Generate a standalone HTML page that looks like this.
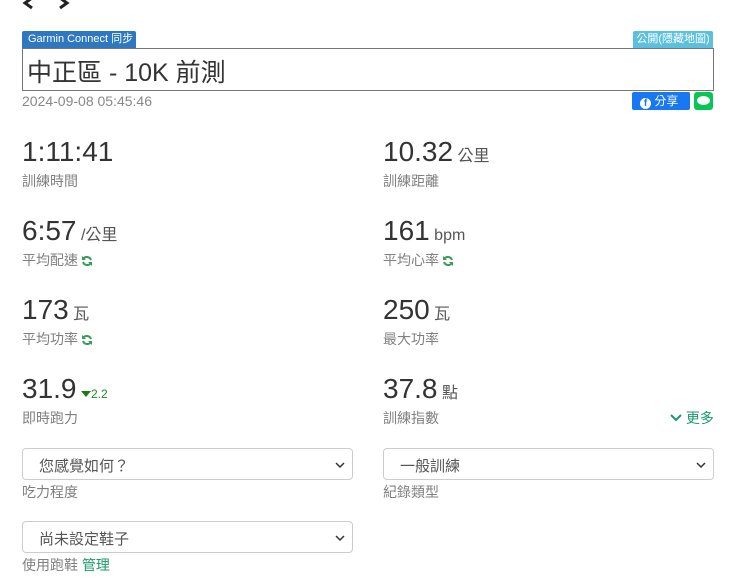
<!DOCTYPE html>
<html><head><meta charset="utf-8"><style>
*{margin:0;padding:0;box-sizing:border-box}
body{width:740px;height:584px;background:#fff;position:relative;overflow:hidden;font-family:"Liberation Sans","Noto Sans CJK TC",sans-serif;color:#333}
.a{position:absolute;white-space:nowrap}
.v{font-size:28px;color:#333;line-height:32px}
.u{font-size:16px;color:#555}
.l{font-size:14px;color:#808080;line-height:18px}
.sel{position:absolute;height:32px;border:1px solid #ccc;border-radius:4px;font-size:15px;color:#555;padding:6px 0 0 16px}
.sel svg{position:absolute;right:7px;top:12px}
.r{display:inline-block;vertical-align:-2px;margin-left:3px}
</style></head><body>
<svg class="a" style="left:20px;top:0" width="60" height="12"><path d="M12 -2 L5 3 L12 8" fill="none" stroke="#222" stroke-width="3"/><path d="M40 -2 L47 3 L40 8" fill="none" stroke="#222" stroke-width="3"/></svg>
<div class="a" style="left:22px;top:31px;width:114px;height:17px;background:#2d78c0;color:#fff;font-size:11px;line-height:17px;padding-left:6px;border-radius:2px 2px 0 0">Garmin Connect 同步</div>
<div class="a" style="left:633px;top:31px;width:80px;height:17px;background:#5bc0de;color:#fff;font-size:11px;line-height:17px;text-align:center;border-radius:2px 2px 0 0">公開(隱藏地圖)</div>
<div class="a" style="left:22px;top:48px;width:692px;height:43px;border:1px solid #777;font-size:25px;color:#333;padding:4px 0 0 4px">中正區 - 10K 前測</div>
<div class="a" style="left:22px;top:93px;font-size:14px;color:#888">2024-09-08 05:45:46</div>
<div class="a" style="left:632px;top:92px;width:58px;height:18px;background:#1877f2;color:#fff;font-size:12px;line-height:18px;border-radius:2px;padding-left:8px"><span style="display:inline-block;width:11px;height:11px;border-radius:50%;background:#fff;color:#1877f2;font-size:10px;line-height:12px;text-align:center;font-weight:bold;vertical-align:-1px">f</span> 分享</div>
<div class="a" style="left:694px;top:92px;width:19px;height:18px;background:#06c755;border-radius:3px"><div style="margin:4px 3px;width:13px;height:9px;background:#fff;border-radius:50%"></div></div>

<div class="a" style="left:22px;top:136px"><span class="v">1:11:41</span></div>
<div class="a l" style="left:22px;top:172px">訓練時間</div>
<div class="a" style="left:383px;top:136px"><span class="v">10.32</span> <span class="u">公里</span></div>
<div class="a l" style="left:383px;top:172px">訓練距離</div>

<div class="a" style="left:22px;top:215px"><span class="v">6:57</span> <span class="u">/公里</span></div>
<div class="a l" style="left:22px;top:251px">平均配速<svg class="r" width="12" height="12"><path d="M10 5A4.5 4.5 0 0 0 2 4M2 7A4.5 4.5 0 0 0 10 8" fill="none" stroke="#3a9a5a" stroke-width="2"/><path d="M1 1V5H5z" fill="#3a9a5a"/><path d="M11 11V7H7z" fill="#3a9a5a"/></svg></div>
<div class="a" style="left:383px;top:215px"><span class="v">161</span> <span class="u">bpm</span></div>
<div class="a l" style="left:383px;top:251px">平均心率<svg class="r" width="12" height="12"><path d="M10 5A4.5 4.5 0 0 0 2 4M2 7A4.5 4.5 0 0 0 10 8" fill="none" stroke="#3a9a5a" stroke-width="2"/><path d="M1 1V5H5z" fill="#3a9a5a"/><path d="M11 11V7H7z" fill="#3a9a5a"/></svg></div>

<div class="a" style="left:22px;top:294px"><span class="v">173</span> <span class="u">瓦</span></div>
<div class="a l" style="left:22px;top:330px">平均功率<svg class="r" width="12" height="12"><path d="M10 5A4.5 4.5 0 0 0 2 4M2 7A4.5 4.5 0 0 0 10 8" fill="none" stroke="#3a9a5a" stroke-width="2"/><path d="M1 1V5H5z" fill="#3a9a5a"/><path d="M11 11V7H7z" fill="#3a9a5a"/></svg></div>
<div class="a" style="left:383px;top:294px"><span class="v">250</span> <span class="u">瓦</span></div>
<div class="a l" style="left:383px;top:330px">最大功率</div>

<div class="a" style="left:22px;top:373px"><span class="v">31.9</span> <span style="font-size:12px;color:#1a8a1a"><svg width="10" height="8"><path d="M0 1H10L5 7z" fill="#1a7a1a"/></svg>2.2</span></div>
<div class="a l" style="left:22px;top:409px">即時跑力</div>
<div class="a" style="left:383px;top:373px"><span class="v">37.8</span> <span class="u">點</span></div>
<div class="a l" style="left:383px;top:409px">訓練指數</div>
<div class="a" style="left:670px;top:408px;font-size:14px;color:#1a9a6a"><svg width="12" height="10"><path d="M1 2L6 7L11 2" fill="none" stroke="#1a9a6a" stroke-width="2"/></svg> 更多</div>

<div class="sel" style="left:22px;top:448px;width:331px">您感覺如何？<svg width="10" height="8"><path d="M1 2L5 6L9 2" fill="none" stroke="#333" stroke-width="1.5"/></svg></div>
<div class="a l" style="left:22px;top:483px">吃力程度</div>
<div class="sel" style="left:383px;top:448px;width:331px">一般訓練<svg width="10" height="8"><path d="M1 2L5 6L9 2" fill="none" stroke="#333" stroke-width="1.5"/></svg></div>
<div class="a l" style="left:383px;top:483px">紀錄類型</div>

<div class="sel" style="left:22px;top:521px;width:331px">尚未設定鞋子<svg width="10" height="8"><path d="M1 2L5 6L9 2" fill="none" stroke="#333" stroke-width="1.5"/></svg></div>
<div class="a l" style="left:22px;top:556px">使用跑鞋 <span style="color:#1a9a6a">管理</span></div>
</body></html>
